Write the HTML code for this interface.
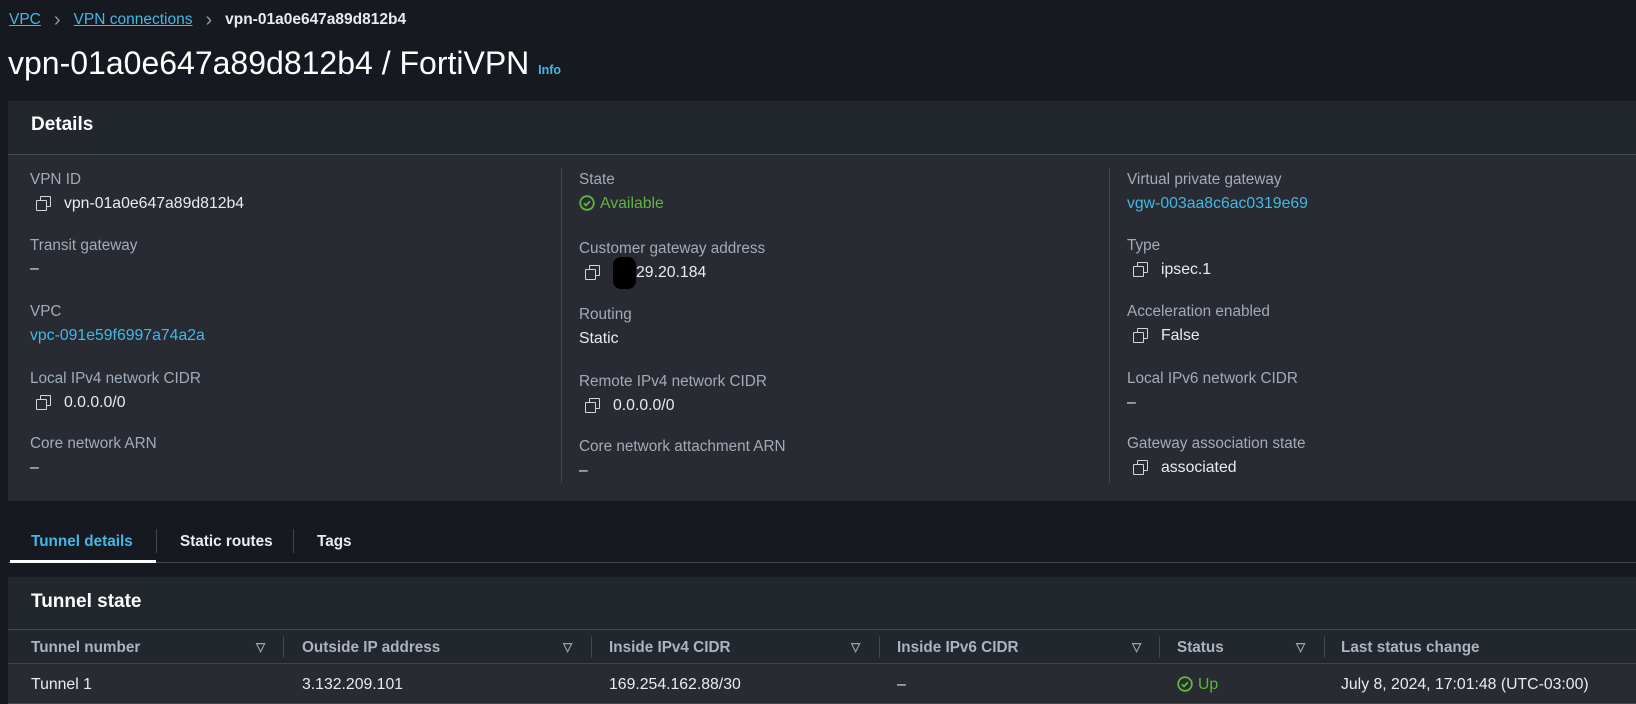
<!DOCTYPE html><html><head><style>
*{margin:0;padding:0;box-sizing:border-box}
body{width:1636px;height:704px;background:#16191f;font-family:"Liberation Sans",sans-serif;color:#e9ebed;position:relative;overflow:hidden;font-size:15.3px}
.a{position:absolute;white-space:nowrap}
.lnk{color:#42b8e6}
.lb{color:#a0acb9;font-size:15.3px}
.v{color:#e9ebed;font-size:15.8px}
.b{font-weight:bold}
.cp{display:inline-block;width:14px;height:14px;position:relative;vertical-align:-2px;margin-right:14px}
.cp:before{content:"";position:absolute;left:4px;top:0;width:9px;height:9px;border:1.6px solid #d1d5db;border-radius:1px}
.cp:after{content:"";position:absolute;left:0;top:4px;width:9px;height:9px;border:1.6px solid #d1d5db;background:#282b32;border-radius:1px}
.ok{display:inline-block;width:16px;height:16px;vertical-align:-3px;margin-right:5px}
.vd{position:absolute;width:1px;background:#414750}
.sort{position:absolute;color:#9aa5b1;font-size:12px;font-weight:bold}
</style></head><body>
<div class="a" style="left:9px;top:9px;font-size:15.5px"><span class="lnk" style="text-decoration:underline">VPC</span><span style="color:#8d99a8;margin:0 13px;font-size:20px;vertical-align:-2px">&#x203A;</span><span class="lnk" style="text-decoration:underline">VPN connections</span><span style="color:#8d99a8;margin:0 13px;font-size:20px;vertical-align:-2px">&#x203A;</span><span class="b">vpn-01a0e647a89d812b4</span></div>
<div class="a" style="left:8px;top:45px;font-size:32px;color:#fff">vpn-01a0e647a89d812b4 / FortiVPN <span class="lnk b" style="font-size:12.5px">Info</span></div>

<div class="a" style="left:8px;top:101px;width:1628px;height:400px;background:#22262d"></div>
<div class="a" style="left:8px;top:154px;width:1628px;height:1px;background:#414750"></div>
<div class="a b" style="left:31px;top:114px;font-size:19px;color:#fff">Details</div>
<div class="a" style="left:8px;top:155px;width:1628px;height:346px;background:#282b32"></div>
<div class="vd" style="left:561px;top:168px;height:315px"></div>
<div class="vd" style="left:1109px;top:168px;height:315px"></div>

<div class="a lb" style="left:30px;top:171px">VPN ID</div>
<div class="a v" style="left:36px;top:195px"><span class="cp"></span>vpn-01a0e647a89d812b4</div>
<div class="a lb" style="left:30px;top:237px">Transit gateway</div>
<div class="a v" style="left:30px;top:260px">–</div>
<div class="a lb" style="left:30px;top:303px">VPC</div>
<div class="a lnk" style="left:30px;top:327px;font-size:15.8px">vpc-091e59f6997a74a2a</div>
<div class="a lb" style="left:30px;top:370px">Local IPv4 network CIDR</div>
<div class="a v" style="left:36px;top:394px"><span class="cp"></span>0.0.0.0/0</div>
<div class="a lb" style="left:30px;top:435px">Core network ARN</div>
<div class="a v" style="left:30px;top:459px">–</div>

<div class="a lb" style="left:579px;top:171px">State</div>
<div class="a" style="left:579px;top:195px;color:#5fb53d;font-size:15.8px"><svg class="ok" viewBox="0 0 16 16"><circle cx="8" cy="8" r="6.8" fill="none" stroke="#5fb53d" stroke-width="1.8"/><path d="M4.8 8.2l2.2 2.2 4-4.2" fill="none" stroke="#5fb53d" stroke-width="1.8"/></svg>Available</div>
<div class="a lb" style="left:579px;top:240px">Customer gateway address</div>
<div class="a v" style="left:585px;top:264px"><span class="cp"></span><span style="display:inline-block;width:23px"></span>29.20.184</div>
<div class="a" style="left:613px;top:257px;width:23px;height:32px;background:#000;border-radius:8px"></div>
<div class="a lb" style="left:579px;top:306px">Routing</div>
<div class="a v" style="left:579px;top:330px">Static</div>
<div class="a lb" style="left:579px;top:373px">Remote IPv4 network CIDR</div>
<div class="a v" style="left:585px;top:397px"><span class="cp"></span>0.0.0.0/0</div>
<div class="a lb" style="left:579px;top:438px">Core network attachment ARN</div>
<div class="a v" style="left:579px;top:462px">–</div>

<div class="a lb" style="left:1127px;top:171px">Virtual private gateway</div>
<div class="a lnk" style="left:1127px;top:195px;font-size:15.8px">vgw-003aa8c6ac0319e69</div>
<div class="a lb" style="left:1127px;top:237px">Type</div>
<div class="a v" style="left:1133px;top:261px"><span class="cp"></span>ipsec.1</div>
<div class="a lb" style="left:1127px;top:303px">Acceleration enabled</div>
<div class="a v" style="left:1133px;top:327px"><span class="cp"></span>False</div>
<div class="a lb" style="left:1127px;top:370px">Local IPv6 network CIDR</div>
<div class="a v" style="left:1127px;top:394px">–</div>
<div class="a lb" style="left:1127px;top:435px">Gateway association state</div>
<div class="a v" style="left:1133px;top:459px"><span class="cp"></span>associated</div>

<div class="a b" style="left:31px;top:533px;color:#42b8e6">Tunnel details</div>
<div class="vd" style="left:156px;top:529px;height:24px"></div>
<div class="a b" style="left:180px;top:533px">Static routes</div>
<div class="vd" style="left:293px;top:529px;height:24px"></div>
<div class="a b" style="left:317px;top:533px">Tags</div>
<div class="a" style="left:8px;top:562px;width:1628px;height:1px;background:#414750"></div>
<div class="a" style="left:10px;top:560px;width:146px;height:3px;background:#fff"></div>

<div class="a" style="left:8px;top:577px;width:1628px;height:127px;background:#22262d"></div>
<div class="a b" style="left:31px;top:591px;font-size:19px;color:#fff">Tunnel state</div>
<div class="a" style="left:8px;top:629px;width:1628px;height:1px;background:#414750"></div>
<div class="a" style="left:8px;top:663px;width:1628px;height:1px;background:#414750"></div>
<div class="a" style="left:8px;top:664px;width:1628px;height:39px;background:#282b32"></div>
<div class="a" style="left:8px;top:703px;width:1628px;height:1px;background:#414750"></div>
<div class="vd" style="left:283px;top:636px;height:22px"></div>
<div class="vd" style="left:591px;top:636px;height:22px"></div>
<div class="vd" style="left:879px;top:636px;height:22px"></div>
<div class="vd" style="left:1159px;top:636px;height:22px"></div>
<div class="vd" style="left:1324px;top:636px;height:22px"></div>
<div class="a b" style="left:31px;top:639px;color:#a8b4c0">Tunnel number</div>
<div class="a b" style="left:302px;top:639px;color:#a8b4c0">Outside IP address</div>
<div class="a b" style="left:609px;top:639px;color:#a8b4c0">Inside IPv4 CIDR</div>
<div class="a b" style="left:897px;top:639px;color:#a8b4c0">Inside IPv6 CIDR</div>
<div class="a b" style="left:1177px;top:639px;color:#a8b4c0">Status</div>
<div class="a b" style="left:1341px;top:639px;color:#a8b4c0">Last status change</div>
<div class="sort" style="left:256px;top:640px">&#9661;</div>
<div class="sort" style="left:563px;top:640px">&#9661;</div>
<div class="sort" style="left:851px;top:640px">&#9661;</div>
<div class="sort" style="left:1132px;top:640px">&#9661;</div>
<div class="sort" style="left:1296px;top:640px">&#9661;</div>
<div class="a v" style="left:31px;top:676px">Tunnel 1</div>
<div class="a v" style="left:302px;top:676px">3.132.209.101</div>
<div class="a v" style="left:609px;top:676px">169.254.162.88/30</div>
<div class="a v" style="left:897px;top:676px">–</div>
<div class="a" style="left:1177px;top:676px;color:#5fb53d;font-size:15.8px"><svg class="ok" viewBox="0 0 16 16"><circle cx="8" cy="8" r="6.8" fill="none" stroke="#5fb53d" stroke-width="1.8"/><path d="M4.8 8.2l2.2 2.2 4-4.2" fill="none" stroke="#5fb53d" stroke-width="1.8"/></svg>Up</div>
<div class="a v" style="left:1341px;top:676px">July 8, 2024, 17:01:48 (UTC-03:00)</div>
</body></html>
